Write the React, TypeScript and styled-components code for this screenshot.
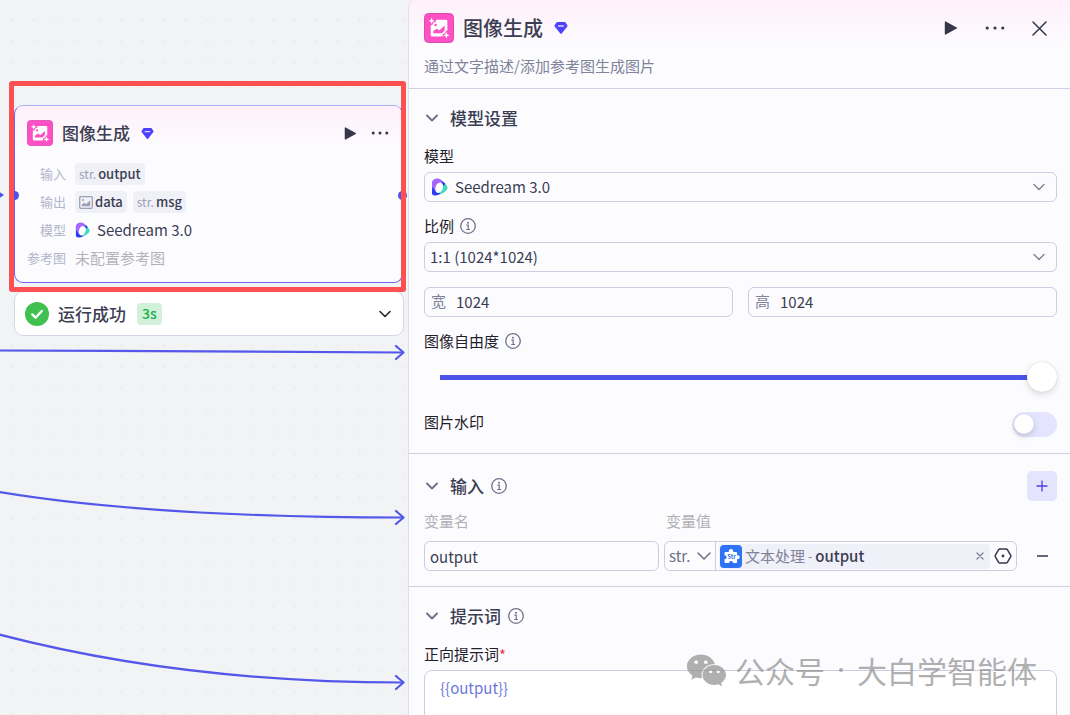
import React from 'react';
import styled, { createGlobalStyle, css } from 'styled-components';
import { FaWeixin } from 'react-icons/fa';

const GlobalStyle = createGlobalStyle`
  *, *::before, *::after { box-sizing: border-box; }
  body {
    margin: 0;
    overflow: hidden;
    font-family: "Noto Sans CJK SC", "Noto Sans", sans-serif;
    font-size: 15px;
    color: #3b3d52;
  }
  button, input, select, textarea { font: inherit; color: inherit; }
  svg { display: block; flex: none; }
`;

const Page = styled.div`
  display: grid;
  grid-template-columns: minmax(0, 408fr) minmax(0, 662fr);
  height: 100vh;
  overflow: hidden;
  background: #f1f3f5;
`;

/* ---------- canvas ---------- */

const Canvas = styled.main`
  position: relative;
  overflow: hidden;
  background-color: #f1f3f5;
`;

const CanvasLayer = styled.svg`
  position: absolute;
  inset: 0;
  width: 100%;
  height: 100%;
`;

const NodeCard = styled.article`
  position: absolute;
  left: 14px;
  right: 5px;
  top: 105px;
  height: 178px;
  padding: 12px 12px 0;
  border: 1px solid #6a63f5;
  border-top-color: #b3b0fb;
  border-radius: 9px;
  background: linear-gradient(#fff0fa 0, #fcfcff 44px);
`;

const NodeHead = styled.header`
  display: flex;
  align-items: center;
  gap: 9px;
  height: 30px;
  margin-bottom: 12px;
`;

const NodeTitle = styled.h2`
  margin: 0 2px 0 0;
  font-size: 17px;
  line-height: 24px;
  font-weight: 500;
`;

const HeadActions = styled.div<{ $gap: number }>`
  display: flex;
  align-items: center;
  gap: ${(p) => p.$gap}px;
  margin-left: auto;
`;

const IconButton = styled.button<{ $size?: number }>`
  display: grid;
  place-items: center;
  flex: none;
  width: ${(p) => p.$size ?? 20}px;
  height: ${(p) => p.$size ?? 20}px;
  padding: 0;
  border: 0;
  background: none;
  color: #35374b;
  cursor: pointer;
`;

const NodeRow = styled.div`
  display: grid;
  grid-template-columns: 39px 1fr;
  column-gap: 9px;
  align-items: center;
  height: 28px;
`;

const NodeKey = styled.span`
  font-size: 13px;
  line-height: 20px;
  text-align: right;
  color: #b2b5cb;
`;

const NodeValue = styled.div<{ $muted?: boolean }>`
  display: flex;
  align-items: center;
  gap: 6px;
  line-height: 22px;
  color: ${(p) => (p.$muted ? '#b4b4b8' : '#3b3d52')};
`;

const Tag = styled.span`
  display: flex;
  align-items: center;
  gap: 2px;
  height: 22px;
  padding: 0 4px;
  border-radius: 4px;
  background: #f0f0f7;
  font-size: 13px;
  font-weight: 500;
  line-height: 22px;
`;

const TagType = styled.span`
  font-size: 12px;
  font-weight: 400;
  color: #9da0b8;
`;

const ResultCard = styled.section`
  position: absolute;
  left: 14px;
  right: 4px;
  top: 291px;
  height: 45px;
  display: flex;
  align-items: center;
  gap: 9px;
  padding: 0 8px 0 10px;
  border: 1px solid #d6d7e5;
  border-radius: 9px;
  background: #fff;
`;

const ResultTitle = styled.span`
  margin-right: 2px;
  font-size: 17px;
  line-height: 24px;
  font-weight: 500;
`;

const Duration = styled.span`
  height: 22px;
  padding: 0 5px;
  border-radius: 4px;
  background: #d2f1da;
  color: #16b048;
  font-size: 14px;
  font-weight: 500;
  line-height: 21px;
`;

const ResultToggle = styled(IconButton)`
  margin-left: auto;
`;

const Port = styled.i<{ $side: 'left' | 'right' }>`
  position: absolute;
  top: 191px;
  ${(p) => (p.$side === 'left' ? 'left: 10px;' : 'right: 1px;')}
  width: 9px;
  height: 9px;
  border-radius: 50%;
  background: #4d53e8;
`;

const Highlight = styled.div`
  position: absolute;
  left: 9px;
  right: 2px;
  top: 81px;
  height: 211px;
  border: 5px solid #fd5052;
  border-radius: 3px;
  pointer-events: none;
`;

/* ---------- settings panel ---------- */

const Panel = styled.aside`
  position: relative;
  display: flex;
  flex-direction: column;
  overflow: hidden;
  border-left: 1px solid #dfe0ee;
  border-top-left-radius: 8px;
  background: linear-gradient(#fff0fa 0, #fcfcff 48px);
`;

const PanelHeader = styled.header`
  flex: none;
  padding: 13px 21px 11px 15px;
  border-bottom: 1px solid #cfd1e3;
`;

const PanelTitleRow = styled.div`
  display: flex;
  align-items: center;
  gap: 9px;
  height: 30px;
`;

const PanelTitle = styled.h1`
  margin: 0 2px 0 0;
  font-size: 20px;
  line-height: 28px;
  font-weight: 500;
`;

const Description = styled.p`
  margin: 12px 0 0;
  line-height: 22px;
  color: #80839a;
`;

const Section = styled.section<{ $roomy?: boolean }>`
  flex: none;
  padding: ${(p) => (p.$roomy ? 17 : 14)}px 13px 15px 15px;
  border-bottom: 1px solid #cfd1e3;
`;

const SectionHead = styled.div`
  display: flex;
  align-items: center;
  gap: 7px;
  height: 30px;
`;

const Collapse = styled.button`
  display: flex;
  align-items: center;
  gap: 10px;
  padding: 0;
  border: 0;
  background: none;
  font-size: 17px;
  line-height: 24px;
  font-weight: 500;
  cursor: pointer;
`;

const AddButton = styled.button`
  display: grid;
  place-items: center;
  width: 30px;
  height: 30px;
  margin-left: auto;
  padding: 0;
  border: 0;
  border-radius: 5px;
  background: #e4e4ff;
  color: #4e40e5;
  cursor: pointer;
`;

const Fields = styled.div`
  display: flex;
  flex-direction: column;
  gap: 12px;
  margin-top: 11px;
`;

const Field = styled.div<{ $gap?: number }>`
  display: flex;
  flex-direction: column;
  gap: ${(p) => p.$gap ?? 4}px;
`;

const LabelRow = styled.div`
  display: flex;
  align-items: center;
  gap: 6px;
  height: 24px;
  color: #1f2029;
`;

const Label = styled.label`
  line-height: 20px;
`;

const boxed = css`
  border: 1px solid #cbcde0;
  border-radius: 6px;
`;

const ControlBox = styled.div<{ $pad?: number }>`
  display: flex;
  align-items: center;
  gap: 6px;
  height: 30px;
  padding: 0 10px 0 ${(p) => p.$pad ?? 5}px;
  ${boxed}
`;

const bare = css`
  flex: 1;
  min-width: 0;
  height: 28px;
  padding: 0 0 2px;
  border: 0;
  outline: 0;
  background: none;
`;

const BareSelect = styled.select`
  ${bare}
  appearance: none;
`;

const BareInput = styled.input`
  ${bare}
`;

const SizeRow = styled.div`
  display: grid;
  grid-template-columns: 1fr 1fr;
  gap: 15px;
  margin-top: 3px;
`;

const SizeLabel = styled.label`
  height: 28px;
  margin-right: 4px;
  line-height: 26px;
  color: #80839a;
`;

const Slider = styled.input`
  width: 100%;
  height: 30px;
  margin: 0;
  appearance: none;
  background: linear-gradient(#4d53e8, #4d53e8) center / calc(100% - 32px) 5px no-repeat;

  &::-webkit-slider-thumb {
    appearance: none;
    width: 30px;
    height: 30px;
    border-radius: 50%;
    background: #fff;
    box-shadow: 0 3px 7px rgba(0, 0, 0, 0.12), 0 0 1px rgba(0, 0, 0, 0.25);
  }
`;

const SwitchRow = styled.div`
  display: flex;
  justify-content: space-between;
  align-items: flex-start;
  height: 26px;
  margin-top: 8px;
  color: #1f2029;
`;

const Switch = styled.input`
  width: 45px;
  height: 25px;
  margin: 0;
  padding: 2px;
  appearance: none;
  border-radius: 13px;
  background: #e4e4ff;

  &::before {
    content: '';
    display: block;
    width: 20px;
    height: 20px;
    border-radius: 50%;
    background: #fff;
    box-shadow: 0 3px 6px rgba(0, 0, 0, 0.14), 0 0 1px rgba(0, 0, 0, 0.25);
  }
`;

const VarGrid = styled.div`
  display: grid;
  grid-template-columns: 235fr 353fr 40px;
  column-gap: 5px;
  row-gap: 7px;
  align-items: center;
  margin-top: 9px;
  margin-right: -5px;
`;

const VarLabel = styled.span<{ $inset?: boolean }>`
  height: 24px;
  padding-left: ${(p) => (p.$inset ? 2 : 0)}px;
  line-height: 22px;
  color: #b0b0b6;
`;

const VarName = styled.input`
  width: 100%;
  height: 30px;
  padding: 0 5px;
  background: none;
  ${boxed}
`;

const VarValue = styled.div`
  display: flex;
  align-items: center;
  min-width: 0;
  height: 30px;
  padding-right: 4px;
  ${boxed}
`;

const TypePicker = styled.div`
  display: flex;
  align-items: center;
  flex: none;
  width: 51px;
  height: 28px;
  padding: 0 3px 0 4px;
  border-right: 1px solid #cbcde0;
  color: #6b6e87;
`;

const Reference = styled.div`
  display: flex;
  align-items: center;
  gap: 3px;
  flex: 1;
  min-width: 0;
  height: 25px;
  margin: 0 4px 0 3px;
  padding: 0 2px 0 1px;
  border-radius: 4px;
  background: #f0f0f8;
  line-height: 24px;
  color: #80839a;
  white-space: nowrap;
`;

const ReferenceDash = styled.span`
  font-size: 12px;
`;

const ReferenceField = styled.strong`
  font-weight: 500;
  color: #3b3d52;
`;

const ClearButton = styled(IconButton)`
  margin-left: auto;
  color: #7d8096;
`;

const RemoveButton = styled(IconButton)`
  justify-self: center;
`;

const Required = styled.span`
  color: #f0384a;
`;

const PromptLabelRow = styled(LabelRow)`
  gap: 0;
`;

const Prompt = styled.textarea`
  display: block;
  width: 100%;
  height: 120px;
  padding: 6px 15px;
  outline: 0;
  resize: none;
  background: #fff;
  line-height: 22px;
  color: #6c78dc;
  ${boxed}
  border-radius: 8px;
`;

const Watermark = styled.div`
  position: absolute;
  right: 33px;
  bottom: 23px;
  display: flex;
  align-items: center;
  gap: 8px;
  font-size: 30px;
  line-height: 44px;
  color: #8c8c8c;
  opacity: 0.68;
  pointer-events: none;
  white-space: nowrap;
`;

const WatermarkDot = styled.i`
  width: 4px;
  height: 4px;
  margin: 0 6px;
  border-radius: 50%;
  background: currentColor;
`;

/* ---------- icons ---------- */

const ImageGenIcon = ({ size }: { size: number }) => (
  <svg width={size} height={size} viewBox="0 0 30 30" aria-hidden="true">
    <rect x="0.5" y="0.5" width="29" height="29" rx="4" fill="#ff4fc4" stroke="#d94bb0" />
    <path
      fill="#fff"
      d="M12.2 6.8H22a1.4 1.4 0 0 1 1.4 1.4v9.6l-1.3-.1-1 2.6-2.5.9.1 2.4H8.1a1.4 1.4 0 0 1-1.4-1.4v-9.8l1.8-.6.9-2 2.2-.9Z"
    />
    <circle cx="11.6" cy="12" r="1.3" fill="#ff4fc4" />
    <path d="M9.2 20.2v-2l3.4-2.5 3 1.6 5-4.7v4.8l-2.8 2.8Z" fill="#ff4fc4" />
    <path d="M7.7 4.6l.9 2.4 2.2.9-2.2.9-.9 2.3-.9-2.3-2.2-.9 2.2-.9ZM22.4 19l1 2.4 2.3.9-2.3 1-1 2.3-.9-2.3-2.3-1 2.3-.9Z" fill="#fff" />
  </svg>
);

const Diamond = ({ size }: { size: number }) => (
  <svg width={size} height={size} viewBox="0 0 14 14" aria-hidden="true">
    <path d="M3.3 1h7.4a1 1 0 0 1 .8.4l1.9 2.8a1 1 0 0 1-.1 1.2l-5.6 7.2a.9.9 0 0 1-1.4 0L.7 5.4a1 1 0 0 1-.1-1.2l1.900-2.800A1 1 0 0 1 3.300 1Z" fill="#4e40ff" />
    <path d="M4.600 5h4.800" stroke="#dcdaff" strokeWidth="1.400" strokeLinecap="round" />
  </svg>
);

const Play = ({ size }: { size: number }) => (
  <svg width={size} height={size} viewBox="0 0 14 14" fill="currentColor" aria-hidden="true">
    <path d="M.8 1.100Q.8 0 1.800.500L12.700 6.400q1 .6 0 1.200L1.800 13.500q-1 .5-1-.6Z" />
  </svg>
);

const More = () => (
  <svg width="20" height="4" viewBox="0 0 20 4" fill="currentColor" aria-hidden="true">
    <circle cx="2.200" cy="2" r="1.600" />
    <circle cx="10" cy="2" r="1.600" />
    <circle cx="17.800" cy="2" r="1.600" />
  </svg>
);

const SmallMore = () => (
  <svg width="18" height="4" viewBox="0 0 18 4" fill="currentColor" aria-hidden="true">
    <circle cx="2.200" cy="2" r="1.500" />
    <circle cx="9" cy="2" r="1.500" />
    <circle cx="15.800" cy="2" r="1.500" />
  </svg>
);

const Cross = ({ size, width }: { size: number; width: number }) => (
  <svg width={size} height={size} viewBox={`0 0 ${size} ${size}`} stroke="currentColor" strokeWidth={width} strokeLinecap="round" aria-hidden="true">
    <path d={`M1 1L${size - 1} ${size - 1}M${size - 1} 1L1 ${size - 1}`} />
  </svg>
);

const Chevron = ({ box, span, color, width }: { box: number; span: number; color: string; width: number }) => {
  const c = box / 2;
  const h = span / 2;
  return (
    <svg width={box} height={box} viewBox={`0 0 ${box} ${box}`} fill="none" stroke={color} strokeWidth={width} strokeLinecap="round" strokeLinejoin="round" aria-hidden="true">
      <path d={`M${c - h} ${c - h / 2}L${c} ${c + h / 2}L${c + h} ${c - h / 2}`} />
    </svg>
  );
};

const Info = () => (
  <svg width="16" height="16" viewBox="0 0 16 16" fill="none" stroke="#6f728a" aria-hidden="true">
    <circle cx="8" cy="8" r="7.300" strokeWidth="1.300" />
    <path d="M6.400 7.200h1.800v4.200M6.200 11.500h3.800" strokeWidth="1.200" />
    <circle cx="8" cy="4.700" r="1" fill="#6f728a" stroke="none" />
  </svg>
);

const SeedreamLogo = ({ size }: { size: number }) => (
  <svg width={size} height={size} viewBox="-1 0 18 18" aria-hidden="true">
    <rect x="-1" width="18" height="18" rx="3" fill="#fff" />
    <path d="M9.500 3C12 4 15.600 8 15.600 9.700C15.600 12 11 15.800 7 16.600V9Z" fill="#3ddcc0" />
    <path d="M0 6V15.500Q0 17.500 2.500 17.500C5 17.500 7 16.800 8 16L6 9Z" fill="#2b3df5" />
    <path d="M9.800 2.600L13.500 5.700L11.500 8L8 5Z" fill="#3a36f5" />
    <path d="M0 9V5C0 2 2.500.6 5.500.6C8 .6 10 2 10.600 4L8 6L3 12Z" fill="#a567ff" />
    <ellipse cx="7.200" cy="9.800" rx="3.700" ry="5.400" transform="rotate(20 7.200 9.800)" fill="#fff" />
  </svg>
);

const PictureIcon = () => (
  <svg width="14" height="13" viewBox="0 0 14 13" fill="none" stroke="#9da0b8" aria-hidden="true">
    <rect x="0.700" y="0.700" width="12.600" height="11.600" rx="1" strokeWidth="1.300" />
    <path d="M2.800 10.200V8.600l2.400-1.800 2.200 1.200 3.800-3.800v6Z" fill="#9da0b8" stroke="none" />
    <circle cx="4" cy="4" r="1" fill="#9da0b8" stroke="none" />
  </svg>
);

const SuccessIcon = () => (
  <svg width="24" height="24" viewBox="0 0 24 24" aria-hidden="true">
    <circle cx="12" cy="12" r="12" fill="#3fc04f" />
    <path d="M7.300 12.400l3.300 3.300 6.200-6.700" fill="none" stroke="#fff" strokeWidth="2.400" strokeLinecap="round" strokeLinejoin="round" />
  </svg>
);

const TextProcessIcon = () => (
  <svg width="22" height="23" viewBox="0 0 22 23" aria-hidden="true">
    <rect width="22" height="23" rx="4" fill="#2f72f5" />
    <path
      d="M5.500 7h3.300c-.3-1.900.8-3 2.200-3s2.500 1.100 2.200 3h2.900a1 1 0 0 1 1 1v2.400c1.700-.2 2.600.6 2.600 1.800s-.9 2-2.600 1.800V17a1 1 0 0 1-1 1h-3c0-1.300-.8-2-2-2s-2 .7-2 2H5.500a1 1 0 0 1-1-1v-2.700c1.300 0 2-.8 2-2s-.7-2-2-2V8a1 1 0 0 1 1-1Z"
      fill="#fff"
    />
    <text x="11.500" y="14" textAnchor="middle" fontSize="6" fontWeight="700" fill="#2f72f5">Str</text>
  </svg>
);

const HexagonDot = () => (
  <svg width="18" height="16" viewBox="0 0 18 16" fill="none" stroke="#35374b" strokeWidth="1.500" strokeLinejoin="round" aria-hidden="true">
    <path d="M6 .9h6a1.800 1.800 0 0 1 1.500.9L16.600 7.100a1.800 1.800 0 0 1 0 1.800L13.500 14.200a1.800 1.800 0 0 1-1.500.9H6a1.800 1.800 0 0 1-1.500-.9L1.400 8.900a1.800 1.800 0 0 1 0-1.800L4.500 1.800A1.800 1.800 0 0 1 6 .9Z" />
    <circle cx="9" cy="8" r="1.400" fill="#35374b" stroke="none" />
  </svg>
);

const Edges = () => (
  <CanvasLayer aria-hidden="true">
    <defs>
      <pattern id="dots" x="1" y="19" width="21.700" height="21.700" patternUnits="userSpaceOnUse">
        <circle cx="11.500" cy="0.900" r="0.900" fill="#e3e5ea" />
      </pattern>
    </defs>
    <rect width="100%" height="100%" fill="url(#dots)" />
    <g fill="none" stroke="#5457ea" strokeWidth="2.200" strokeLinecap="round" strokeLinejoin="round">
      <path d="M-1 350.500C130 350.500 240 352.500 403 352.500" />
      <path d="M-1 492C120 512 270 517.500 403 517.500" />
      <path d="M-1 634.500C120 666 250 682.500 403 682.500" />
      <path d="M396 346l7.500 6.500-7.500 6.500M396 511l7.500 6.500-7.500 6.500M396 676l7.500 6.500-7.500 6.500" />
    </g>
    <path d="M-3 190l7 5-7 5Z" fill="#4d53e8" />
  </CanvasLayer>
);

const fieldChevron = <Chevron box={14} span={10} color="#7c7e8c" width={1.3} />;
const sectionChevron = <Chevron box={16} span={10} color="#6f728a" width={2} />;

export default function App() {
  return (
    <>
      <GlobalStyle />
      <Page>
        <Canvas>
          <Edges />
          <NodeCard>
            <NodeHead>
              <ImageGenIcon size={26} />
              <NodeTitle>图像生成</NodeTitle>
              <Diamond size={13} />
              <HeadActions $gap={10}>
                <IconButton aria-label="运行"><Play size={13} /></IconButton>
                <IconButton aria-label="更多"><SmallMore /></IconButton>
              </HeadActions>
            </NodeHead>
            <NodeRow>
              <NodeKey>输入</NodeKey>
              <NodeValue>
                <Tag><TagType>str.</TagType>output</Tag>
              </NodeValue>
            </NodeRow>
            <NodeRow>
              <NodeKey>输出</NodeKey>
              <NodeValue>
                <Tag><PictureIcon />data</Tag>
                <Tag><TagType>str.</TagType>msg</Tag>
              </NodeValue>
            </NodeRow>
            <NodeRow>
              <NodeKey>模型</NodeKey>
              <NodeValue><SeedreamLogo size={16} />Seedream 3.0</NodeValue>
            </NodeRow>
            <NodeRow>
              <NodeKey>参考图</NodeKey>
              <NodeValue $muted>未配置参考图</NodeValue>
            </NodeRow>
          </NodeCard>
          <Port $side="left" />
          <Port $side="right" />
          <ResultCard>
            <SuccessIcon />
            <ResultTitle>运行成功</ResultTitle>
            <Duration>3s</Duration>
            <ResultToggle aria-label="展开">
              <Chevron box={16} span={10} color="#222430" width={1.6} />
            </ResultToggle>
          </ResultCard>
          <Highlight />
        </Canvas>

        <Panel>
          <PanelHeader>
            <PanelTitleRow>
              <ImageGenIcon size={30} />
              <PanelTitle>图像生成</PanelTitle>
              <Diamond size={14} />
              <HeadActions $gap={24}>
                <IconButton aria-label="运行"><Play size={14} /></IconButton>
                <IconButton aria-label="更多"><More /></IconButton>
                <IconButton aria-label="关闭"><Cross size={15} width={1.5} /></IconButton>
              </HeadActions>
            </PanelTitleRow>
            <Description>通过文字描述/添加参考图生成图片</Description>
          </PanelHeader>

          <Section>
            <SectionHead>
              <Collapse>{sectionChevron}模型设置</Collapse>
            </SectionHead>
            <Fields>
              <Field>
                <LabelRow><Label htmlFor="model">模型</Label></LabelRow>
                <ControlBox $pad={6}>
                  <SeedreamLogo size={18} />
                  <BareSelect id="model"><option>Seedream 3.0</option></BareSelect>
                  {fieldChevron}
                </ControlBox>
              </Field>
              <Field>
                <LabelRow><Label htmlFor="ratio">比例</Label><Info /></LabelRow>
                <ControlBox>
                  <BareSelect id="ratio"><option>1:1 (1024*1024)</option></BareSelect>
                  {fieldChevron}
                </ControlBox>
              </Field>
              <SizeRow>
                <ControlBox $pad={6}>
                  <SizeLabel htmlFor="width">宽</SizeLabel>
                  <BareInput id="width" defaultValue="1024" />
                </ControlBox>
                <ControlBox $pad={6}>
                  <SizeLabel htmlFor="height">高</SizeLabel>
                  <BareInput id="height" defaultValue="1024" />
                </ControlBox>
              </SizeRow>
              <Field $gap={9}>
                <LabelRow><Label htmlFor="freedom">图像自由度</Label><Info /></LabelRow>
                <Slider id="freedom" type="range" min={0} max={100} defaultValue={100} />
              </Field>
              <SwitchRow>
                <Label htmlFor="mark">图片水印</Label>
                <Switch id="mark" type="checkbox" />
              </SwitchRow>
            </Fields>
          </Section>

          <Section $roomy>
            <SectionHead>
              <Collapse>{sectionChevron}输入</Collapse>
              <Info />
              <AddButton aria-label="添加">
                <svg width="12" height="12" viewBox="0 0 12 12" stroke="currentColor" strokeWidth="1.300" aria-hidden="true">
                  <path d="M6 .5v11M.5 6h11" />
                </svg>
              </AddButton>
            </SectionHead>
            <VarGrid>
              <VarLabel>变量名</VarLabel>
              <VarLabel $inset>变量值</VarLabel>
              <span />
              <VarName aria-label="变量名" defaultValue="output" />
              <VarValue>
                <TypePicker>
                  <BareSelect aria-label="变量类型"><option>str.</option></BareSelect>
                  <Chevron box={16} span={12} color="#6b6e87" width={1.5} />
                </TypePicker>
                <Reference>
                  <TextProcessIcon />
                  <span>文本处理</span>
                  <ReferenceDash>-</ReferenceDash>
                  <ReferenceField>output</ReferenceField>
                  <ClearButton $size={16} aria-label="清除"><Cross size={8} width={1.3} /></ClearButton>
                </Reference>
                <IconButton $size={18} aria-label="选择变量"><HexagonDot /></IconButton>
              </VarValue>
              <RemoveButton aria-label="删除">
                <svg width="11" height="2" viewBox="0 0 11 2" aria-hidden="true">
                  <path d="M0 1h11" stroke="currentColor" strokeWidth="1.500" />
                </svg>
              </RemoveButton>
            </VarGrid>
          </Section>

          <Section>
            <SectionHead>
              <Collapse>{sectionChevron}提示词</Collapse>
              <Info />
            </SectionHead>
            <Fields>
              <Field>
                <PromptLabelRow>
                  <Label htmlFor="prompt">正向提示词</Label>
                  <Required>*</Required>
                </PromptLabelRow>
                <Prompt id="prompt" defaultValue="{{output}}" />
              </Field>
            </Fields>
          </Section>
          <Watermark>
            <FaWeixin size={41} />
            <span>公众号</span>
            <WatermarkDot />
            <span>大白学智能体</span>
          </Watermark>
        </Panel>
      </Page>
    </>
  );
}
